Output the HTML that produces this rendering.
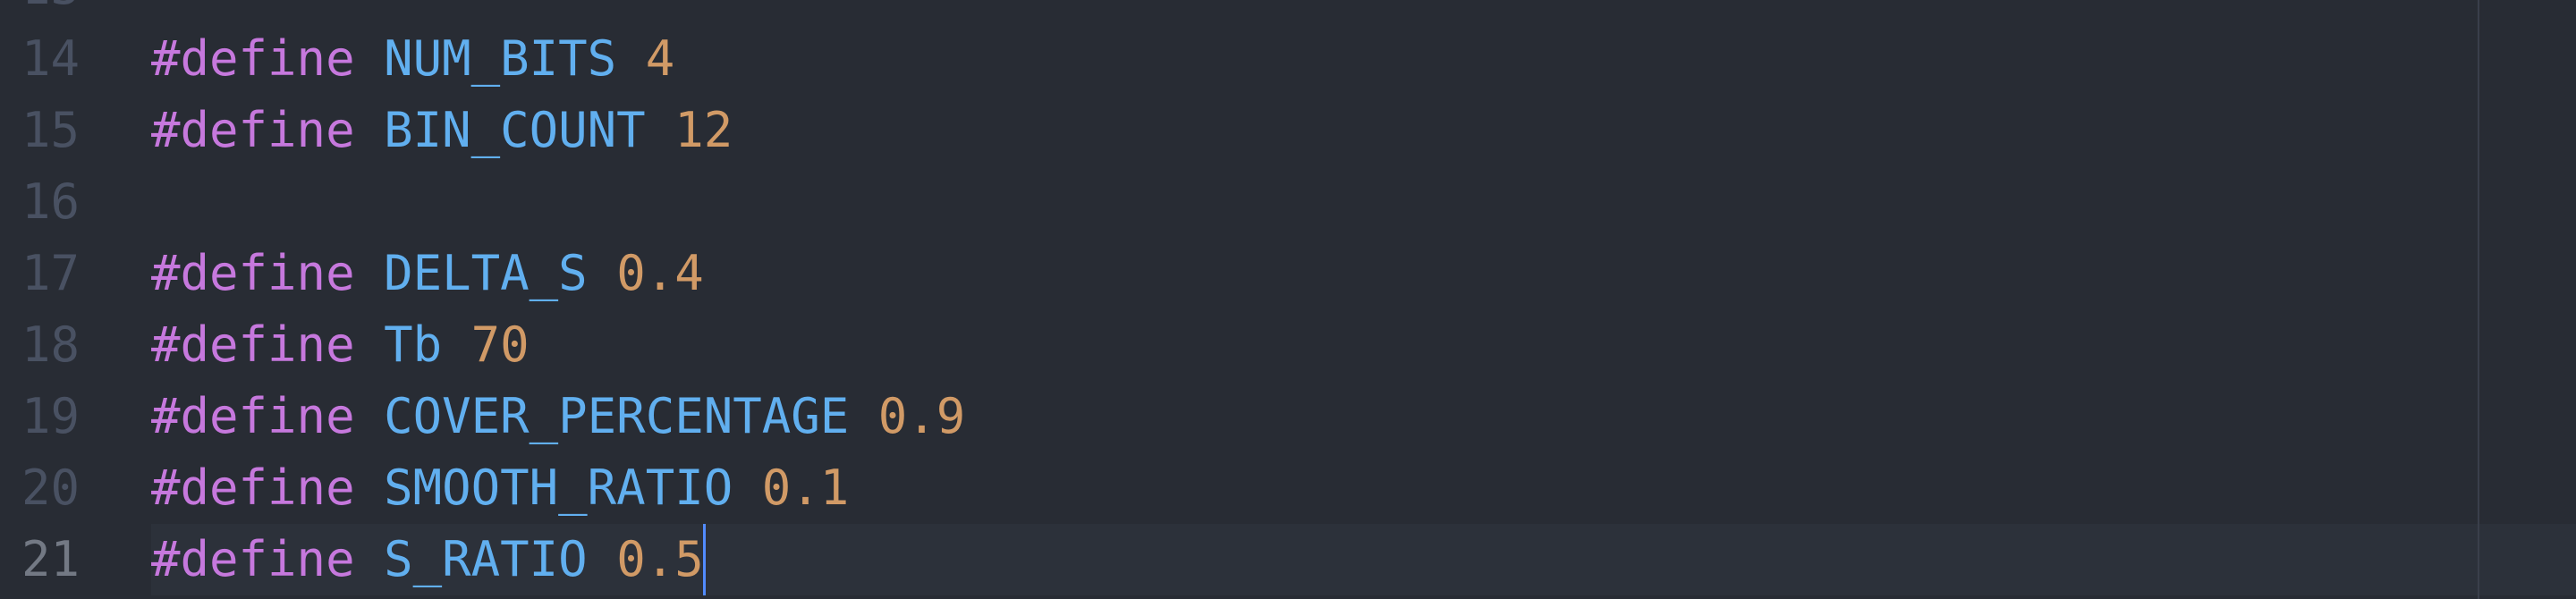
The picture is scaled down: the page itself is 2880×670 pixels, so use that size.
<!DOCTYPE html>
<html><head><meta charset="utf-8"><style>
html,body{margin:0;padding:0;width:2880px;height:670px;overflow:hidden;background:#282c34}
.ed{position:absolute;left:0;top:0;width:2880px;height:670px;background:#282c34}
.line{position:absolute;left:0;width:2880px;height:80px;font-family:"DejaVu Sans Mono","Liberation Mono",monospace;font-size:54px;line-height:80px;white-space:pre}
.num{position:absolute;left:0;width:89px;text-align:right;color:#495162}
.code{position:absolute;left:169px;right:0;top:0;height:80px}
.cur .code{background:#2c313a}
.cur .num{color:#737984}
.k{color:#c678dd}.m{color:#61afef}.n{color:#d19a66}
.caret{display:inline-block;width:3px;height:80px;background:#528bff;vertical-align:top;margin-left:-1px}
.guide{position:absolute;left:2770px;top:0;width:2px;height:670px;background:#3a3f4b}
</style></head><body><div class="ed">
<div class="line" style="top:-54px"><span class="num">13</span></div>
<div class="line" style="top:26px"><span class="num">14</span><span class="code"><span class="k">#define</span> <span class="m">NUM_BITS</span> <span class="n">4</span></span></div>
<div class="line" style="top:106px"><span class="num">15</span><span class="code"><span class="k">#define</span> <span class="m">BIN_COUNT</span> <span class="n">12</span></span></div>
<div class="line" style="top:186px"><span class="num">16</span></div>
<div class="line" style="top:266px"><span class="num">17</span><span class="code"><span class="k">#define</span> <span class="m">DELTA_S</span> <span class="n">0.4</span></span></div>
<div class="line" style="top:346px"><span class="num">18</span><span class="code"><span class="k">#define</span> <span class="m">Tb</span> <span class="n">70</span></span></div>
<div class="line" style="top:426px"><span class="num">19</span><span class="code"><span class="k">#define</span> <span class="m">COVER_PERCENTAGE</span> <span class="n">0.9</span></span></div>
<div class="line" style="top:506px"><span class="num">20</span><span class="code"><span class="k">#define</span> <span class="m">SMOOTH_RATIO</span> <span class="n">0.1</span></span></div>
<div class="line cur" style="top:586px"><span class="num">21</span><span class="code"><span class="k">#define</span> <span class="m">S_RATIO</span> <span class="n">0.5</span><span class="caret"></span></span></div>
<div class="guide"></div>
</div></body></html>
